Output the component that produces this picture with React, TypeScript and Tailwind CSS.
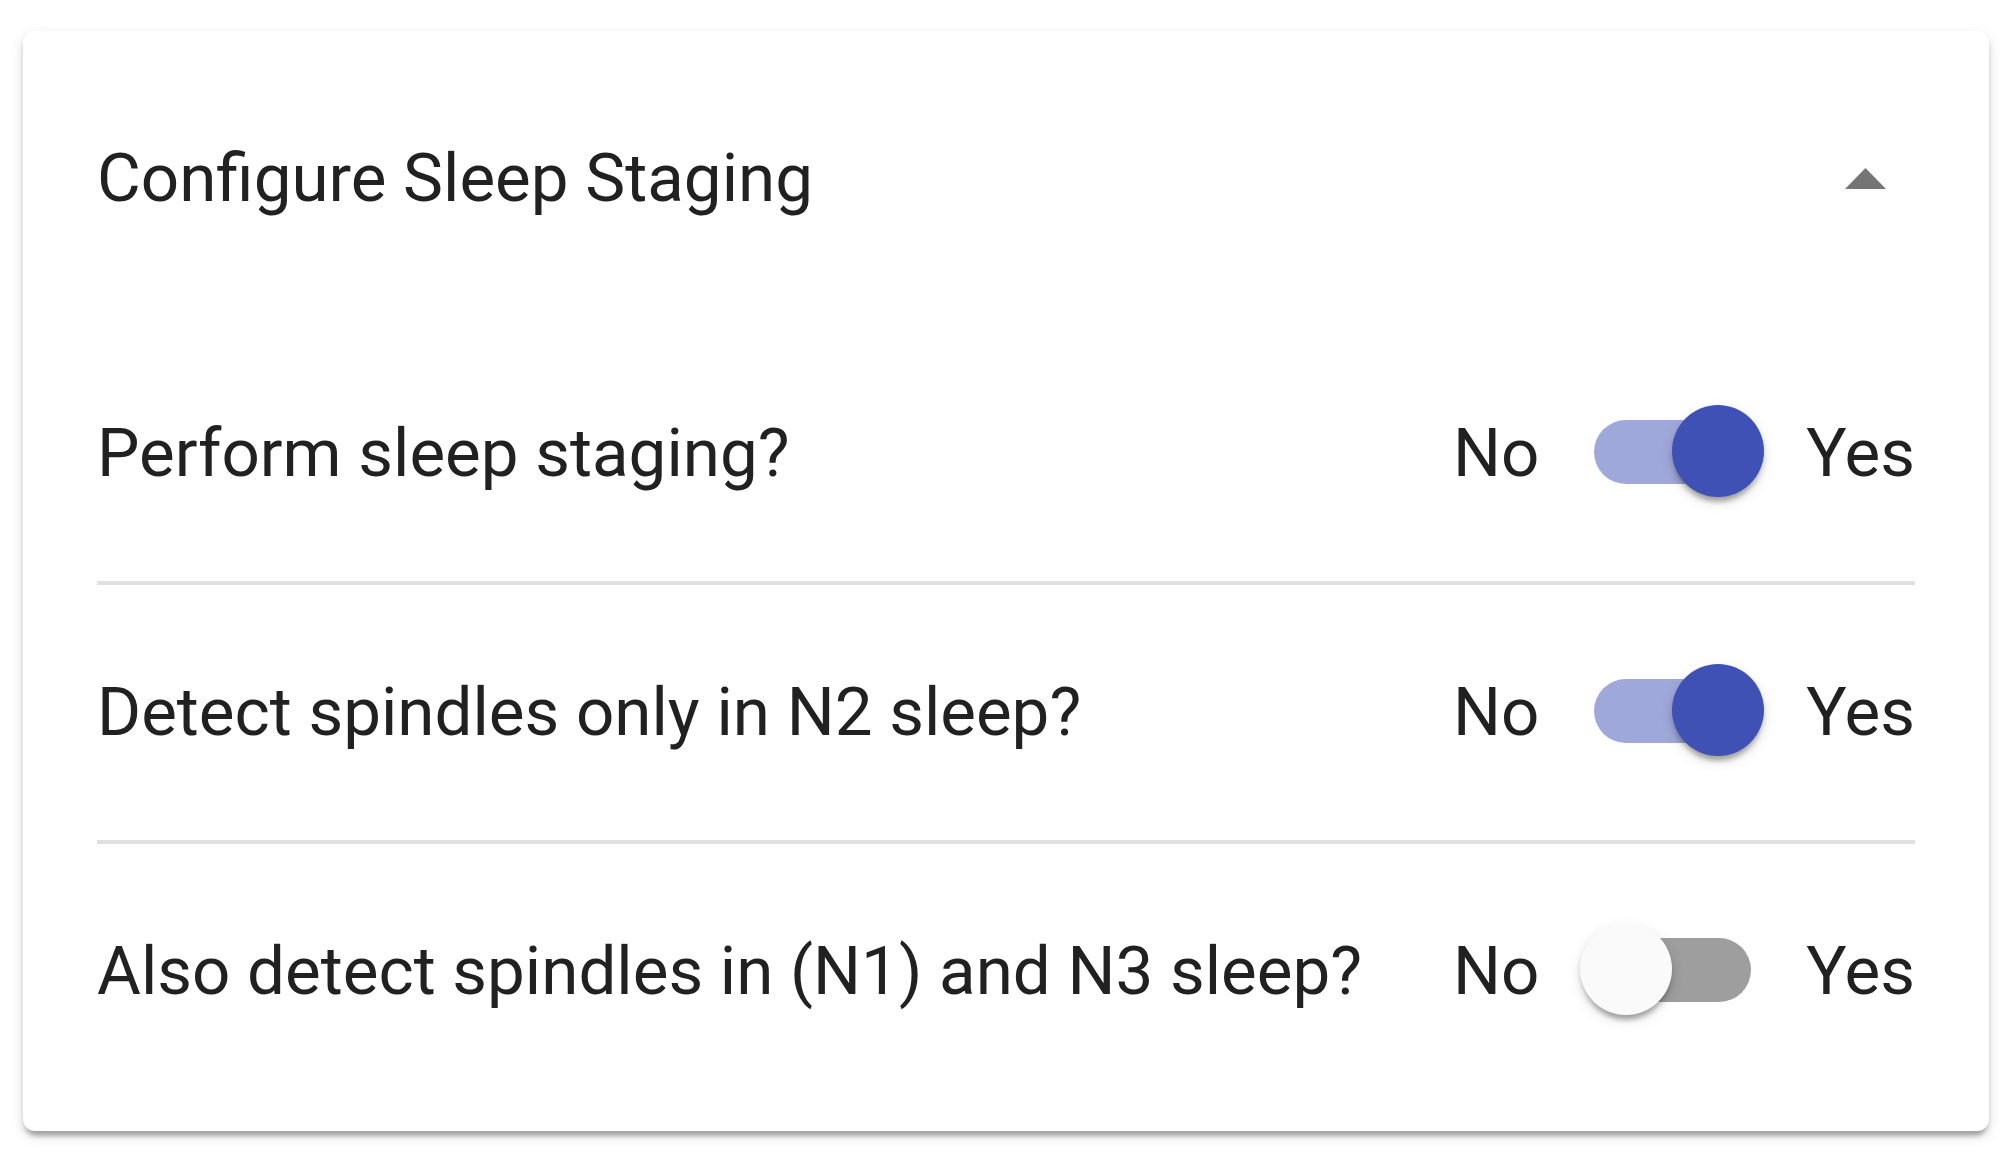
import React, { useState } from "react";

interface ToggleRowProps {
  label: string;
  checked: boolean;
  onToggle: () => void;
  last?: boolean;
}

function Toggle({ checked, onToggle }: { checked: boolean; onToggle: () => void }) {
  return (
    <button
      type="button"
      role="switch"
      aria-checked={checked}
      onClick={onToggle}
      className="relative w-[267px] h-[175px] shrink-0 cursor-pointer"
    >
      {/* track */}
      <span
        className={`absolute left-[55px] top-[56px] w-[157px] h-[64px] rounded-full ${
          checked ? "bg-[#9fa8da]" : "bg-[#9e9e9e]"
        }`}
      />
      {/* thumb */}
      <span
        className={`absolute top-[41px] w-[92px] h-[92px] rounded-full shadow-[0_9px_5px_-5px_rgba(0,0,0,0.2),0_5px_5px_0_rgba(0,0,0,0.14),0_5px_14px_0_rgba(0,0,0,0.12)] ${
          checked ? "left-[133px] bg-[#3f51b5]" : "left-[41px] bg-[#fafafa]"
        }`}
      />
    </button>
  );
}

function ToggleRow({ label, checked, onToggle, last }: ToggleRowProps) {
  return (
    <div className={last ? "" : "border-b-4 border-[#e0e0e0]"}>
      <div className="flex items-center justify-between pt-[38px] pb-[42px]">
        <span className="pt-[3px]">{label}</span>
        <div className="flex items-center">
          <span className="pt-[3px]">No</span>
          <Toggle checked={checked} onToggle={onToggle} />
          <span className="pt-[3px]">Yes</span>
        </div>
      </div>
    </div>
  );
}

export default function App() {
  const [open, setOpen] = useState(true);
  const [staging, setStaging] = useState(true);
  const [n2Only, setN2Only] = useState(true);
  const [n1n3, setN1n3] = useState(false);

  return (
    <div className="min-h-screen bg-white pt-[31px] px-[23px] font-['Roboto',sans-serif] text-[#212121] text-[67.3px] leading-[1.2]">
      <div className="bg-white rounded-[12px] shadow-[0_9px_5px_-5px_rgba(0,0,0,0.2),0_5px_5px_0_rgba(0,0,0,0.14),0_5px_14px_0_rgba(0,0,0,0.12)]">
        {/* Summary */}
        <div className="h-[295px] flex items-center justify-between px-[74px]">
          <h2 className="font-normal">Configure Sleep Staging</h2>
          <button
            type="button"
            onClick={() => setOpen(!open)}
            className="w-[100px] h-[100px] flex items-center justify-center cursor-pointer"
          >
            <svg
              width="41"
              height="21"
              viewBox="0 0 41 21"
              className={open ? "" : "rotate-180"}
            >
              <path d="M0 21L20.5 0L41 21Z" fill="#757575" />
            </svg>
          </button>
        </div>

        {/* Details */}
        {open && (
          <div className="px-[74px] pb-[32px]">
            <ToggleRow
              label="Perform sleep staging?"
              checked={staging}
              onToggle={() => setStaging(!staging)}
            />
            <ToggleRow
              label="Detect spindles only in N2 sleep?"
              checked={n2Only}
              onToggle={() => setN2Only(!n2Only)}
            />
            <ToggleRow
              label="Also detect spindles in (N1) and N3 sleep?"
              checked={n1n3}
              onToggle={() => setN1n3(!n1n3)}
              last
            />
          </div>
        )}
      </div>
    </div>
  );
}
